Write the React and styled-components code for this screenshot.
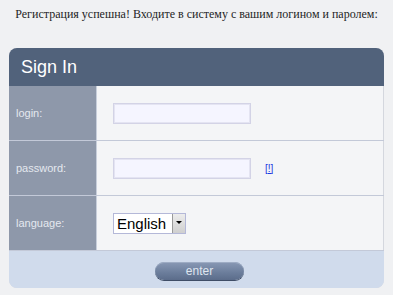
import React from "react";
import styled, { createGlobalStyle } from "styled-components";

const Global = createGlobalStyle`
  html, body { margin: 0; padding: 0; background: #f0f1f3; }
  body { font-family: "Liberation Sans", Arial, sans-serif; }
`;

const Page = styled.div`
  padding: 0 9px 0 9px;
  height: 295px;
  box-sizing: border-box;
`;

const Notice = styled.p`
  margin: 0;
  padding-top: 6px;
  height: 48px;
  box-sizing: border-box;
  text-align: center;
  white-space: nowrap;
  font-family: "Liberation Serif", "Times New Roman", serif;
  font-size: 12px;
  color: #1e1e1e;
  line-height: 16px;
`;

const Panel = styled.div`
  width: 375px;
  border-radius: 8px;
  overflow: hidden;
  background: #f4f5f7;
  box-shadow: inset 0 0 0 1px #d4d7de;
`;

const Header = styled.div`
  height: 38px;
  background: #51627b;
  color: #ffffff;
  font-size: 18px;
  display: flex;
  align-items: center;
  padding-left: 12px;
`;

const Row = styled.div`
  display: grid;
  grid-template-columns: 88px 1fr;
  height: ${(p) => p.$h}px;
  border-bottom: 1px solid #c3c9d8;
`;

const Label = styled.div`
  background: #8e98aa;
  border-right: 1px solid #c7cedb;
  color: #e4e8ef;
  font-size: 11px;
  display: flex;
  align-items: center;
  padding-left: 7px;
`;

const Cell = styled.div`
  display: flex;
  align-items: center;
  padding-left: 16px;
  gap: 14px;
  padding-right: 1px;
`;

const Input = styled.div`
  width: 138px;
  height: 21px;
  box-sizing: border-box;
  border: 1px solid #d3d3e6;
  box-shadow: inset 0 0 0 1px #e4e4f2;
  background: #f5f5ff;
`;

const Hint = styled.a`
  font-size: 10px;
  color: #2038e0;
  text-decoration: underline;
  cursor: pointer;
`;

const Select = styled.div`
  display: flex;
  height: 21px;
  box-sizing: border-box;
  border: 1px solid #b4b8d8;
  background: #ffffff;
`;

const SelectText = styled.span`
  font-size: 15px;
  line-height: 19px;
  color: #000;
  padding: 0 6px 0 3px;
`;

const SelectBtn = styled.span`
  width: 12px;
  background: linear-gradient(#ececec, #cfcfcf);
  border-left: 1px solid #9a9a9a;
  display: flex;
  align-items: center;
  justify-content: center;
`;

const Footer = styled.div`
  height: 37px;
  background: #d0dbec;
  display: flex;
  justify-content: center;
  align-items: center;
  padding-left: 6px;
`;

const Button = styled.button`
  width: 89px;
  height: 18px;
  border: none;
  border-radius: 9px;
  background: linear-gradient(#8999b5, #6b7d9b 60%, #5b6c8a);
  box-shadow: 0 1px 0 #3f4d66, inset 0 1px 0 #9eacc4;
  color: #dfe5ef;
  font-family: "Liberation Sans", Arial, sans-serif;
  font-size: 12px;
  line-height: 18px;
  padding: 0;
  margin-top: 2px;
`;

export default function App() {
  return (
    <>
      <Global />
      <Page>
        <Notice>Регистрация успешна! Входите в систему с вашим логином и паролем:</Notice>
        <Panel>
          <Header>Sign In</Header>
          <Row $h={54}>
            <Label>login:</Label>
            <Cell>
              <Input />
            </Cell>
          </Row>
          <Row $h={54}>
            <Label>password:</Label>
            <Cell>
              <Input />
              <Hint>[!]</Hint>
            </Cell>
          </Row>
          <Row $h={54}>
            <Label>language:</Label>
            <Cell>
              <Select>
                <SelectText>English</SelectText>
                <SelectBtn>
                  <svg width="6" height="4" viewBox="0 0 6 4">
                    <path d="M0 0h6L3 3z" fill="#000" />
                  </svg>
                </SelectBtn>
              </Select>
            </Cell>
          </Row>
          <Footer>
            <Button>enter</Button>
          </Footer>
        </Panel>
      </Page>
    </>
  );
}
